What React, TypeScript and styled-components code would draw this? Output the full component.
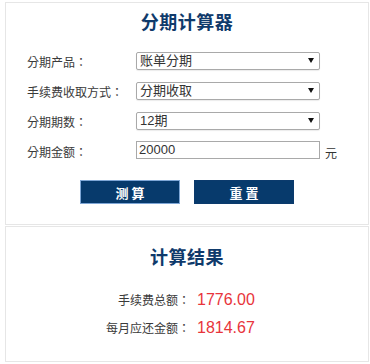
import React from "react";
import styled, { createGlobalStyle } from "styled-components";

const fontStack = `"Liberation Sans", "Noto Sans CJK TC", sans-serif`;

const GlobalStyle = createGlobalStyle`
  html, body {
    margin: 0;
    padding: 0;
    background: #ffffff;
  }
  body {
    font-family: ${fontStack};
    color: #333333;
  }
`;

const Page = styled.div`
  width: 364px;
  padding: 2px 0 0 5px;
`;

const Panel = styled.section<{ $gapTop?: number }>`
  border: 1px solid #e6e6e6;
  margin-top: ${({ $gapTop }) => $gapTop ?? 0}px;
  padding: ${({ $gapTop }) => ($gapTop ? "19px 0 19px" : "8px 0 20px")};
`;

const Title = styled.h2`
  margin: 0;
  font-family: "Liberation Sans", "Noto Sans CJK SC", sans-serif;
  font-size: 18px;
  line-height: 24px;
  font-weight: 700;
  text-align: center;
  color: #0f3a6b;
  letter-spacing: 0.5px;
`;

const Form = styled.div`
  display: grid;
  grid-template-columns: 109px 184px auto;
  grid-auto-rows: 18px;
  row-gap: 12px;
  margin-top: 16px;
  padding-left: 21px;
`;

const Label = styled.div`
  font-size: 12px;
  line-height: 12px;
  padding-top: 6px;
  color: #3a3a3a;
  white-space: nowrap;
`;

const SelectWrap = styled.div`
  position: relative;
  height: 18px;
`;

const Select = styled.select`
  appearance: none;
  -webkit-appearance: none;
  box-sizing: border-box;
  width: 100%;
  height: 18px;
  margin: 0;
  padding: 0 16px 0 3px;
  border: 1px solid #a9a9a9;
  border-radius: 2px;
  background: #ffffff;
  box-shadow: 0 1px 1px rgba(0, 0, 0, 0.08);
  font-family: "Liberation Sans", "Noto Sans CJK SC", sans-serif;
  font-size: 13px;
  line-height: 16px;
  color: #333333;
  outline: none;
`;

const Arrow = styled.svg`
  position: absolute;
  right: 6px;
  top: 7px;
  width: 6px;
  height: 5px;
  pointer-events: none;
`;

const TextInput = styled.input`
  box-sizing: border-box;
  width: 100%;
  height: 18px;
  margin: 0;
  padding: 0 2px 2px 2px;
  border: 1px solid #a9a9a9;
  font-family: "Liberation Sans", "Noto Sans CJK SC", sans-serif;
  font-size: 13px;
  color: #333333;
  outline: none;
`;

const Unit = styled.div`
  font-size: 12px;
  line-height: 12px;
  padding-top: 7px;
  margin-left: 5px;
`;

const Empty = styled.div``;

const Buttons = styled.div`
  display: flex;
  justify-content: center;
  gap: 14px;
  margin-top: 21px;
`;

const Button = styled.button<{ $focused?: boolean }>`
  box-sizing: border-box;
  width: 100px;
  height: 24px;
  margin: 0;
  padding: 0 0 0 3px;
  border: 1px solid ${({ $focused }) => ($focused ? "#7ea6d6" : "#0b3a6c")};
  background: #073a6c;
  color: #ffffff;
  font-family: "Liberation Sans", "Noto Sans CJK SC", sans-serif;
  font-size: 13px;
  font-weight: 700;
  letter-spacing: 3px;
  cursor: pointer;
`;

const Results = styled.div`
  margin-top: 16px;
`;

const ResultRow = styled.div`
  display: flex;
  align-items: baseline;
  height: 28px;
  line-height: 28px;
`;

const ResultLabel = styled.div`
  width: 184px;
  text-align: right;
  font-size: 12px;
  color: #3a3a3a;
`;

const ResultValue = styled.div`
  margin-left: 7px;
  font-size: 16px;
  color: #e8343b;
`;

const DownArrow = () => (
  <Arrow viewBox="0 0 6 5">
    <path d="M0 0 H6 L3 5 Z" fill="#111111" />
  </Arrow>
);

type Option = { label: string; options: string[] };

const selects: Option[] = [
  { label: "分期产品：", options: ["账单分期", "现金分期"] },
  { label: "手续费收取方式：", options: ["分期收取", "一次性收取"] },
  { label: "分期期数：", options: ["12期", "3期", "6期", "24期"] },
];

const results = [
  { label: "手续费总额：", value: "1776.00" },
  { label: "每月应还金额：", value: "1814.67" },
];

export default function App() {
  return (
    <>
      <GlobalStyle />
      <Page>
        <Panel>
          <Title>分期计算器</Title>
          <Form>
            {selects.map((s) => (
              <React.Fragment key={s.label}>
                <Label>{s.label}</Label>
                <SelectWrap>
                  <Select defaultValue={s.options[0]}>
                    {s.options.map((o) => (
                      <option key={o} value={o}>
                        {o}
                      </option>
                    ))}
                  </Select>
                  <DownArrow />
                </SelectWrap>
                <Empty />
              </React.Fragment>
            ))}
            <Label>分期金额：</Label>
            <TextInput defaultValue="20000" />
            <Unit>元</Unit>
          </Form>
          <Buttons>
            <Button $focused>测算</Button>
            <Button>重置</Button>
          </Buttons>
        </Panel>
        <Panel $gapTop={1}>
          <Title>计算结果</Title>
          <Results>
            {results.map((r) => (
              <ResultRow key={r.label}>
                <ResultLabel>{r.label}</ResultLabel>
                <ResultValue>{r.value}</ResultValue>
              </ResultRow>
            ))}
          </Results>
        </Panel>
      </Page>
    </>
  );
}
